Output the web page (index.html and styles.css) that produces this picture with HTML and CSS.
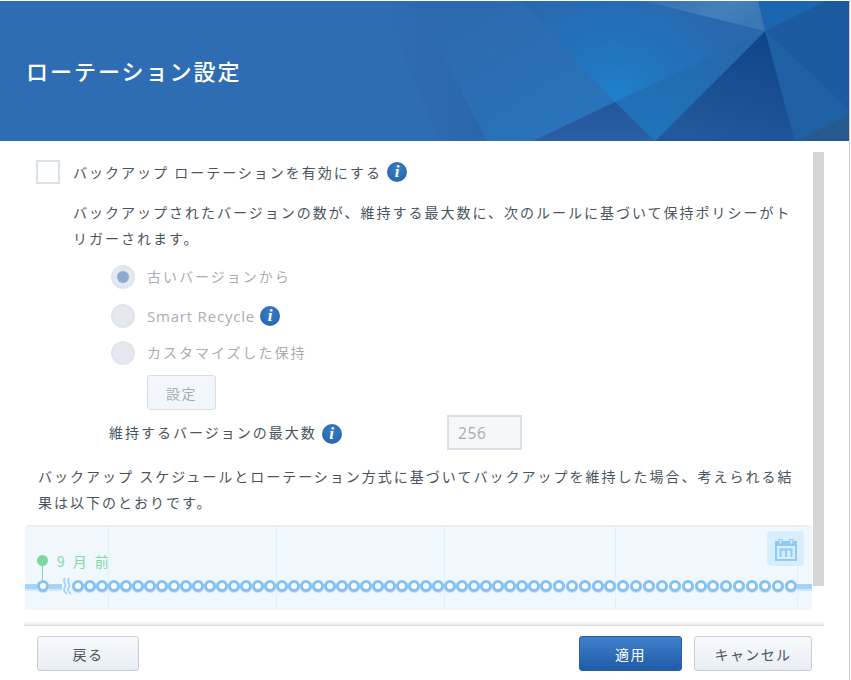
FILE: index.html
```html
<!DOCTYPE html>
<html lang="ja">
<head>
<meta charset="utf-8">
<title>ローテーション設定</title>
<link rel="stylesheet" href="styles.css">
</head>
<body>
<div class="dialog">
  <header class="banner">
    <svg class="banner-art" viewBox="0 1 849 140" aria-hidden="true">
      <defs>
        <linearGradient id="strip" x1="0" y1="0" x2="1" y2="0"><stop offset="0" stop-color="#2e6cb3"/><stop offset="1" stop-color="#2a66ac"/></linearGradient>
        <linearGradient id="mid" gradientUnits="userSpaceOnUse" x1="450" y1="10" x2="530" y2="141"><stop offset="0" stop-color="#2c69af"/><stop offset="1" stop-color="#2a72b9"/></linearGradient>
        <radialGradient id="lit" gradientUnits="userSpaceOnUse" cx="614" cy="104" r="135"><stop offset="0" stop-color="#1f82cc"/><stop offset="0.5" stop-color="#2271ba"/><stop offset="1" stop-color="#2a67ae"/></radialGradient>
        <linearGradient id="top" x1="0" y1="0" x2="1" y2="0.3"><stop offset="0" stop-color="#3270b0"/><stop offset="0.7" stop-color="#4480bb"/><stop offset="1" stop-color="#3a78b4"/></linearGradient>
        <linearGradient id="dark" x1="0.8" y1="0" x2="0.4" y2="1"><stop offset="0" stop-color="#0f4488"/><stop offset="1" stop-color="#23589c"/></linearGradient>
        <linearGradient id="side" x1="0.7" y1="0" x2="0.4" y2="1"><stop offset="0" stop-color="#2766ab"/><stop offset="1" stop-color="#1e74ba"/></linearGradient>
        <linearGradient id="low" x1="0.5" y1="0" x2="0.5" y2="1"><stop offset="0" stop-color="#23568f"/><stop offset="0.2" stop-color="#24579c"/><stop offset="1" stop-color="#2b60a6"/></linearGradient>
      </defs>
      <polygon points="380,0 415,0 487,141 440,141" fill="url(#strip)"/>
      <polygon points="415,0 640,0 765,31 615,102 533,141 487,141" fill="url(#mid)"/>
      <polygon points="520,0 640,0 765,31 615,102" fill="url(#lit)"/>
      <polygon points="640,0 758,0 765,31" fill="url(#top)"/>
      <polygon points="758,0 828,0 765,31" fill="#1b66b0"/>
      <polygon points="828,0 849,0 849,110 765,31" fill="#1b5a9e"/>
      <polygon points="765,31 849,110 849,114 795,141" fill="#1f60a5"/>
      <polygon points="795,141 849,114 849,141" fill="#26598f"/>
      <polygon points="765,31 795,141 655,141" fill="url(#dark)"/>
      <polygon points="765,31 655,141 615,102" fill="url(#side)"/>
      <polygon points="615,102 655,141 533,141" fill="url(#low)"/>
    </svg>
    <h1 class="title">ローテーション設定</h1>
  </header>

  <main class="content">
    <div class="scrollbar"></div>

    <div class="enable-row">
      <span class="checkbox"></span>
      <span class="text">バックアップ ローテーションを有効にする</span>
      <span class="info">i</span>
    </div>

    <p class="para para-rule">バックアップされたバージョンの数が、維持する最大数に、次のルールに基づいて保持ポリシーがトリガーされます。</p>

    <div class="radio-row radio-first">
      <span class="radio radio-on"></span>
      <span class="text muted">古いバージョンから</span>
    </div>
    <div class="radio-row radio-second">
      <span class="radio"></span>
      <span class="latin muted">Smart Recycle</span>
      <span class="info">i</span>
    </div>
    <div class="radio-row radio-third">
      <span class="radio"></span>
      <span class="text muted">カスタマイズした保持</span>
    </div>

    <button class="btn btn-setting" type="button" disabled>設定</button>

    <div class="max-row">
      <span class="max-label">
        <span class="text">維持するバージョンの最大数</span>
        <span class="info">i</span>
      </span>
      <input class="max-input" type="text" value="256" disabled>
    </div>

    <p class="para para-result">バックアップ スケジュールとローテーション方式に基づいてバックアップを維持した場合、考えられる結果は以下のとおりです。</p>

    <section class="timeline">
      <div class="grid-lines">
        <span class="cell cell-a"></span>
        <span class="cell cell-a"></span>
        <span class="cell cell-b"></span>
        <span class="cell cell-c"></span>
        <span class="cell cell-d"></span>
      </div>

      <button class="cal-btn" type="button" aria-label="カレンダー">
        <svg width="22" height="22" viewBox="0 0 22 22" aria-hidden="true">
          <rect x="1" y="3" width="20" height="18" fill="none" stroke="#8ccaf8" stroke-width="2"/>
          <rect x="1" y="3" width="20" height="4" fill="#8ccaf8"/>
          <rect x="4" y="0.5" width="3" height="4.5" fill="#d8edfd" stroke="#8ccaf8"/>
          <rect x="15" y="0.5" width="3" height="4.5" fill="#d8edfd" stroke="#8ccaf8"/>
          <path d="M5.5 18V10.5H16.5V18M11 10.5V18" fill="none" stroke="#8ccaf8" stroke-width="2"/>
        </svg>
      </button>

      <div class="pin-row">
        <span class="pin"></span>
        <span class="pin-label">9 月 前</span>
      </div>

      <div class="track">
        <span class="line line-lead"></span>
        <span class="dot"></span>
        <span class="line line-break"></span>
        <svg class="waves" width="10" height="18" viewBox="0 0 10 18" aria-hidden="true">
          <path d="M3 1C0 5 5 7 3 10S2 15 5 17M7 1C4 5 9 7 7 10S6 15 9 17" fill="none" stroke="#a6d4f8" stroke-width="2"/>
        </svg>
        <span class="dots dots-a">
          <span class="dot"></span><span class="dot"></span><span class="dot"></span><span class="dot"></span><span class="dot"></span><span class="dot"></span><span class="dot"></span><span class="dot"></span><span class="dot"></span><span class="dot"></span><span class="dot"></span><span class="dot"></span><span class="dot"></span>
          <span class="dot"></span><span class="dot"></span><span class="dot"></span><span class="dot"></span><span class="dot"></span><span class="dot"></span><span class="dot"></span><span class="dot"></span><span class="dot"></span><span class="dot"></span><span class="dot"></span><span class="dot"></span><span class="dot"></span>
          <span class="dot"></span><span class="dot"></span><span class="dot"></span><span class="dot"></span><span class="dot"></span><span class="dot"></span><span class="dot"></span><span class="dot"></span><span class="dot"></span><span class="dot"></span><span class="dot"></span><span class="dot"></span><span class="dot"></span>
        </span>
        <span class="dots dots-b">
          <span class="dot"></span><span class="dot"></span><span class="dot"></span><span class="dot"></span><span class="dot"></span><span class="dot"></span><span class="dot"></span><span class="dot"></span><span class="dot"></span><span class="dot"></span>
          <span class="dot"></span><span class="dot"></span><span class="dot"></span><span class="dot"></span><span class="dot"></span><span class="dot"></span><span class="dot"></span><span class="dot"></span><span class="dot"></span><span class="dot"></span>
        </span>
        <span class="line line-tail"></span>
      </div>
    </section>
  </main>

  <footer class="footer">
    <button class="btn btn-back" type="button">戻る</button>
    <span class="footer-actions">
      <button class="btn btn-primary" type="button">適用</button>
      <button class="btn btn-cancel" type="button">キャンセル</button>
    </span>
  </footer>
</div>
</body>
</html>
```

FILE: styles.css
```css
* { box-sizing: border-box; }

html, body { margin: 0; height: 100%; background: #fff; overflow: hidden; }

body {
  font-family: "Noto Sans CJK JP", "Noto Sans", sans-serif;
  font-size: 14px;
  color: #4a5460;
}

.dialog {
  width: 850px;
  height: 680px;
  padding-top: 1px;
  border-right: 1px solid #c9cbce;
}

/* banner */
.banner {
  position: relative;
  height: 140px;
  background: #2e6cb3;
  display: flex;
  align-items: center;
  padding: 0 0 2px 26px;
}
.banner-art { position: absolute; left: 0; top: 0; width: 849px; height: 140px; }
.title {
  position: relative;
  margin: 0;
  font-size: 22px;
  font-weight: 500;
  letter-spacing: 2px;
  line-height: 30px;
  color: #fff;
}

/* body */
.content { position: relative; height: 469px; padding-top: 19px; }

.scrollbar {
  position: absolute;
  left: 813px;
  top: 11px;
  width: 11px;
  height: 434px;
  background: #d4d5d7;
}

.text { letter-spacing: 2px; line-height: 24px; white-space: nowrap; }
.muted { color: #a7adb6; }
.latin {
  font-family: "Open Sans", "Noto Sans", sans-serif;
  font-size: 15px;
  letter-spacing: 0.8px;
  line-height: 24px;
}

.info {
  flex: none;
  width: 20px;
  height: 20px;
  border-radius: 50%;
  background: radial-gradient(circle at 50% 35%, #3a7cc4, #2162ab);
  color: #fff;
  font: italic 700 17px/20px "Liberation Serif", serif;
  text-align: center;
}

.enable-row {
  display: flex;
  align-items: center;
  margin-left: 36px;
  height: 24px;
}
.checkbox {
  flex: none;
  width: 24px;
  height: 24px;
  margin-right: 13px;
  border: 2px solid #dce2e9;
  background: #fff;
}
.enable-row .info { margin-left: 5px; }

.para {
  margin: 0;
  line-height: 26px;
  letter-spacing: 2px;
}
.para-rule { margin: 15px 48px 0 73px; }
.para-result { margin: 13px 48px 0 38px; }

.radio-row {
  display: flex;
  align-items: center;
  height: 24px;
  margin-left: 111px;
}
.radio-row .text { margin-top: -2px; }
.radio-first { margin-top: 14px; }
.radio-second { margin-top: 15px; }
.radio-third { margin-top: 13px; }
.radio-second .info { margin-left: 5px; }

.radio {
  flex: none;
  width: 24px;
  height: 24px;
  margin-right: 12px;
  border-radius: 50%;
  border: 2px solid #e0e5ec;
  background: #e5e8ee;
  display: flex;
  align-items: center;
  justify-content: center;
}
.radio-on::after {
  content: "";
  width: 12px;
  height: 12px;
  border-radius: 50%;
  background: #8daad2;
}

/* buttons */
.btn {
  display: block;
  height: 35px;
  padding: 0;
  border: 1px solid #c6ced9;
  border-radius: 3px;
  background: linear-gradient(#f6f9fc, #e9eef4);
  font: inherit;
  letter-spacing: 1.4px;
  color: #4a5460;
}
.btn-setting {
  width: 69px;
  margin: 10px 0 0 147px;
  border-color: #d5dde7;
  background: linear-gradient(#f3f7fb, #f1f6fb);
  color: #a7adb6;
}
.btn-back { width: 102px; }
.btn-cancel { width: 118px; }
.btn-primary {
  width: 103px;
  border-color: #2660a8;
  background: linear-gradient(#3f80ca, #1f5ca8);
  color: #fff;
}

/* max versions */
.max-row {
  display: flex;
  align-items: center;
  height: 35px;
  margin: 5px 0 0 109px;
}
.max-label {
  display: flex;
  align-items: center;
  width: 338px;
}
.max-label .text { margin-top: -2px; }
.max-label .info { margin: 2px 0 0 5px; }
.max-input {
  width: 75px;
  height: 35px;
  padding: 0 0 0 9px;
  border: 2px solid #d8dfe8;
  background: #f6f7f9;
  font-family: "Open Sans", "Noto Sans", sans-serif;
  font-size: 15.5px;
  letter-spacing: 0.6px;
  color: #a7adb6;
}

/* timeline */
.timeline {
  position: relative;
  width: 787px;
  height: 85px;
  margin: 10px 0 0 25px;
  overflow: hidden;
  border-top: 2px solid #e8eef2;
  border-radius: 4px 4px 0 0;
  background: #f0f8fe;
}

.grid-lines {
  position: absolute;
  left: 83px;
  top: 0;
  bottom: 0;
  display: flex;
}
.cell { height: 100%; border-left: 1px solid #e3eef8; }
.cell-a { width: 168px; }
.cell-b { width: 171px; }
.cell-c { width: 182px; }
.cell-d { width: 10px; }

.cal-btn {
  position: absolute;
  left: 742px;
  top: 4px;
  width: 37px;
  height: 35px;
  padding: 2px 0 0;
  border: 0;
  border-radius: 4px;
  background: #d8edfd;
}
.cal-btn svg { display: block; margin: 0 auto; }

.pin-row {
  display: flex;
  align-items: center;
  height: 11px;
  margin: 28px 0 0 12px;
}
.pin {
  position: relative;
  flex: none;
  width: 11px;
  height: 11px;
  margin-right: 9px;
  border-radius: 50%;
  background: #7dd9a0;
}
.pin::after {
  content: "";
  position: absolute;
  left: 5px;
  top: 11px;
  width: 1px;
  height: 14px;
  background: #7dd9a0;
}
.pin-label { color: #80dba4; letter-spacing: 2.4px; white-space: nowrap; line-height: 14px; }

.track {
  position: relative;
  display: flex;
  align-items: center;
  height: 12px;
  margin-top: 14px;
}
.line {
  flex: none;
  height: 7px;
  margin-top: 3px;
  background: linear-gradient(#a5d4f9 65%, #cfe8fc 65%);
}
.line-lead { width: 12px; }
.line-break { width: 13px; }
.line-tail { flex: 1; }
.waves { flex: none; }

.dots { display: flex; flex: none; }
.dots-b { gap: 0.88px; }
.dot {
  flex: none;
  width: 12px;
  height: 12px;
  border-radius: 50%;
  border: 3px solid #85c2f3;
  background: #fff;
  box-shadow: 0 1px 1px rgba(110, 170, 225, 0.35);
}

/* footer */
.footer {
  position: relative;
  display: flex;
  justify-content: space-between;
  width: 800px;
  margin: 15px 0 0 24px;
  padding: 10px 12px 0 13px;
  border-top: 1px solid #dcdcdc;
}
.footer::before {
  content: "";
  position: absolute;
  left: 0;
  right: 0;
  top: -4px;
  height: 3px;
  background: linear-gradient(#fafafa, #eeeeee);
}
.footer-actions { display: flex; gap: 12px; }
```
